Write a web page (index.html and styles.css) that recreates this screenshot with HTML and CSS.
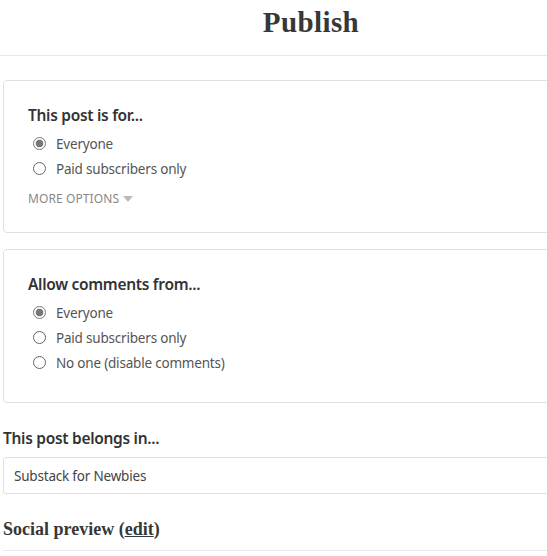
FILE: index.html
```html
<!DOCTYPE html>
<html>
<head>
<meta charset="utf-8">
<link rel="stylesheet" href="styles.css">
</head>
<body>
<div class="page">
  <header class="header"><h1 class="title">Publish</h1></header>
  <main class="content">
    <section class="card">
      <h2 class="card-title">This post is for...</h2>
      <ul class="radios">
        <li class="radio-row"><span class="radio checked"></span>Everyone</li>
        <li class="radio-row"><span class="radio"></span>Paid subscribers only</li>
      </ul>
      <div class="more">MORE OPTIONS <span class="caret"></span></div>
    </section>
    <section class="card card--comments">
      <h2 class="card-title">Allow comments from...</h2>
      <ul class="radios">
        <li class="radio-row"><span class="radio checked"></span>Everyone</li>
        <li class="radio-row"><span class="radio"></span>Paid subscribers only</li>
        <li class="radio-row"><span class="radio"></span>No one (disable comments)</li>
      </ul>
    </section>
    <h3 class="label">This post belongs in...</h3>
    <div class="select">Substack for Newbies</div>
    <h3 class="social">Social preview (<span class="edit">edit</span>)</h3>
    <div class="rule"></div>
  </main>
</div>
</body>
</html>
```
FILE: styles.css
```css
html, body {
  margin: 0;
  padding: 0;
  background: #fff;
  overflow: hidden;
}
body {
  font-family: "Noto Sans", "Open Sans", sans-serif;
  color: #333;
}
.page {
  width: 640px;
}
.header {
  width: 622px;
  height: 56px;
  box-sizing: border-box;
  padding-bottom: 10px;
  border-bottom: 1px solid #e8e8e8;
  display: flex;
  align-items: center;
  justify-content: center;
}
.title {
  margin: 0;
  font-family: "Liberation Serif", "DejaVu Serif", serif;
  font-weight: 700;
  font-size: 29px;
  color: #363737;
  letter-spacing: 0.4px;
}
.content {
  padding: 24px 0 0 3px;
  display: flex;
  flex-direction: column;
}
.card {
  border: 1px solid #e0e0e0;
  border-radius: 4px;
  padding: 23px 24px 24px 24px;
  margin-bottom: 16px;
  width: 600px;
}
.card--comments {
  padding-bottom: 27px;
}
.card-title {
  margin: 0 0 5px 0;
  font-size: 15.5px;
  font-weight: 600;
  letter-spacing: -0.3px;
  line-height: 22px;
  color: #333;
}
.radios {
  list-style: none;
  margin: 0;
  padding: 0;
}
.radio-row {
  display: flex;
  align-items: center;
  height: 25px;
  font-size: 13.5px;
  letter-spacing: -0.2px;
  color: #555;
}
.radio {
  width: 13px;
  height: 13px;
  border: 1px solid #666;
  border-radius: 50%;
  margin: 0 10px 0 5px;
  box-sizing: border-box;
  flex: none;
}
.radio.checked {
  border-color: #777;
  background: radial-gradient(circle, #777 0 3.5px, #fff 4.2px);
}
.more {
  margin-top: 9px;
  font-size: 12px;
  color: #888;
  letter-spacing: 0.1px;
  display: flex;
  align-items: center;
  gap: 4px;
  line-height: 18px;
}
.caret {
  width: 0;
  height: 0;
  border-left: 5px solid transparent;
  border-right: 5px solid transparent;
  border-top: 6px solid #bbb;
}
.label {
  margin: 8px 0 8px 0;
  font-size: 15.5px;
  font-weight: 600;
  letter-spacing: -0.3px;
  line-height: 22px;
  color: #333;
}
.select {
  width: 620px;
  height: 37px;
  box-sizing: border-box;
  border: 1px solid #e0e0e0;
  border-radius: 3px;
  padding-left: 10px;
  display: flex;
  align-items: center;
  font-size: 13.5px;
  letter-spacing: -0.2px;
  color: #444;
}
.social {
  margin: 23px 0 0 0;
  font-family: "Liberation Serif", "DejaVu Serif", serif;
  font-size: 18px;
  font-weight: 700;
  line-height: 24px;
  color: #363737;
}
.edit {
  text-decoration: underline;
}
.rule {
  margin-top: 9px;
  width: 640px;
  border-top: 1px solid #e8e8e8;
}
```
